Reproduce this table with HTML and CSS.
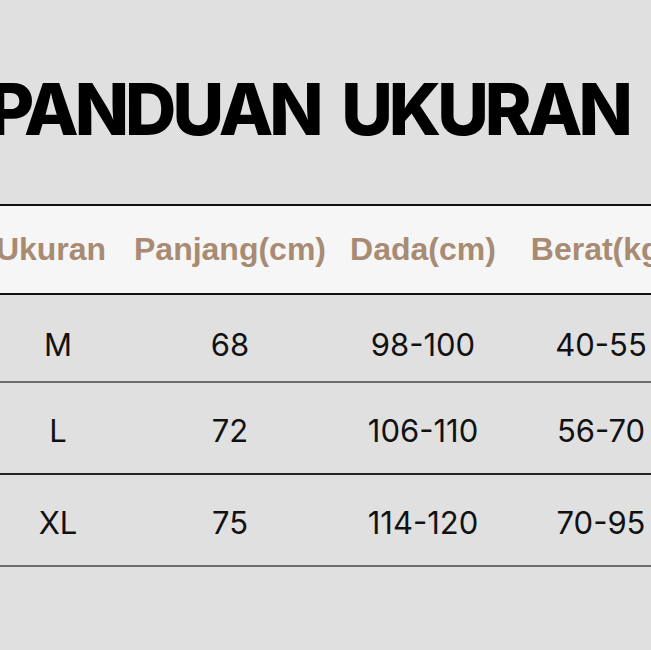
FILE: index.html
```html
<!DOCTYPE html>
<html>
<head>
<meta charset="utf-8">
<link rel="stylesheet" href="styles.css">
</head>
<body>
<div class="page">
  <h1 class="title">PANDUAN UKURAN</h1>
  <div class="table">
    <div class="row head">
      <div class="cell c1">Ukuran</div>
      <div class="cell c2">Panjang(cm)</div>
      <div class="cell c3">Dada(cm)</div>
      <div class="cell c4">Berat(kg)</div>
    </div>
    <div class="row body r1">
      <div class="cell c1">M</div>
      <div class="cell c2">68</div>
      <div class="cell c3">98-100</div>
      <div class="cell c4">40-55</div>
    </div>
    <div class="row body r2">
      <div class="cell c1">L</div>
      <div class="cell c2">72</div>
      <div class="cell c3">106-110</div>
      <div class="cell c4">56-70</div>
    </div>
    <div class="row body r3">
      <div class="cell c1">XL</div>
      <div class="cell c2">75</div>
      <div class="cell c3">114-120</div>
      <div class="cell c4">70-95</div>
    </div>
  </div>
</div>
</body>
</html>
```

FILE: styles.css
```css
html, body {
  margin: 0;
  padding: 0;
  background: #e0e0e0;
  overflow: hidden;
}
.page {
  width: 651px;
  height: 650px;
  overflow: hidden;
}
.title {
  margin: 73px 0 0 -12px;
  font-family: Inter, "Liberation Sans", sans-serif;
  font-weight: 800;
  font-size: 71px;
  line-height: 72px;
  color: #000;
  white-space: nowrap;
  letter-spacing: -4px;
  word-spacing: 10px;
}
.table {
  margin-top: 59px;
  width: 700px;
}
.row {
  display: grid;
  grid-template-columns: 116px 228px 158px 198px;
  align-items: center;
  box-sizing: border-box;
}
.cell {
  text-align: center;
  white-space: nowrap;
}
.head {
  height: 91px;
  background: #f6f6f6;
  border-top: 2px solid #111;
  border-bottom: 2px solid #111;
  font-family: "Liberation Sans", Arial, sans-serif;
  font-weight: 700;
  font-size: 32px;
  color: #a88b73;
}
.head .c1 { margin-left: -14px; }
.body {
  height: 92px;
  padding-top: 4px;
  border-bottom: 2px solid #6e6e6e;
  font-family: Inter, "Liberation Sans", sans-serif;
  font-weight: 400;
  font-size: 31px;
  color: #111;
}
.r1 { height: 88px; padding-top: 12px; }
.r2 { border-bottom-color: #222; }
```
